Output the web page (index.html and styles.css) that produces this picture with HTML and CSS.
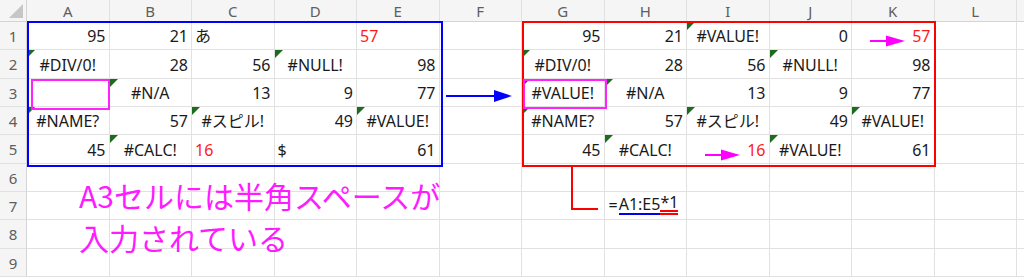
FILE: index.html
```html
<!DOCTYPE html>
<html lang="ja">
<head>
<meta charset="utf-8">
<link rel="stylesheet" href="styles.css">
</head>
<body>
<div class="sheet">
  <div class="grid">
    <div class="corner"><svg class="corner-tri" width="14" height="14" viewBox="0 0 14 14"><polygon points="14,0 14,14 0,14" fill="#c6c6c6"/></svg></div>
    <div class="ch">A</div><div class="ch">B</div><div class="ch">C</div><div class="ch">D</div><div class="ch">E</div><div class="ch">F</div><div class="ch">G</div><div class="ch">H</div><div class="ch">I</div><div class="ch">J</div><div class="ch">K</div><div class="ch">L</div><div class="ch"></div>

    <div class="rh">1</div>
    <div class="c n">95</div><div class="c n">21</div><div class="c t">あ</div><div class="c"></div><div class="c t red">57</div><div class="c"></div>
    <div class="c n">95</div><div class="c n">21</div><div class="c e err">#VALUE!</div><div class="c n">0</div><div class="c n red">57</div><div class="c"></div><div class="c"></div>

    <div class="rh">2</div>
    <div class="c e err">#DIV/0!</div><div class="c n">28</div><div class="c n">56</div><div class="c e err">#NULL!</div><div class="c n">98</div><div class="c"></div>
    <div class="c e err">#DIV/0!</div><div class="c n">28</div><div class="c n">56</div><div class="c e err">#NULL!</div><div class="c n">98</div><div class="c"></div><div class="c"></div>

    <div class="rh">3</div>
    <div class="c"></div><div class="c e err">#N/A</div><div class="c n">13</div><div class="c n">9</div><div class="c n">77</div><div class="c"></div>
    <div class="c e err">#VALUE!</div><div class="c e err">#N/A</div><div class="c n">13</div><div class="c n">9</div><div class="c n">77</div><div class="c"></div><div class="c"></div>

    <div class="rh">4</div>
    <div class="c e err">#NAME?</div><div class="c n">57</div><div class="c e err">#スピル!</div><div class="c n">49</div><div class="c e err">#VALUE!</div><div class="c"></div>
    <div class="c e err">#NAME?</div><div class="c n">57</div><div class="c e err">#スピル!</div><div class="c n">49</div><div class="c e err">#VALUE!</div><div class="c"></div><div class="c"></div>

    <div class="rh">5</div>
    <div class="c n">45</div><div class="c e err">#CALC!</div><div class="c t red">16</div><div class="c t">$</div><div class="c n">61</div><div class="c"></div>
    <div class="c n">45</div><div class="c e err">#CALC!</div><div class="c n red">16</div><div class="c e err">#VALUE!</div><div class="c n">61</div><div class="c"></div><div class="c"></div>

    <div class="rh">6</div>
    <div class="c"></div><div class="c"></div><div class="c"></div><div class="c"></div><div class="c"></div><div class="c"></div><div class="c"></div><div class="c"></div><div class="c"></div><div class="c"></div><div class="c"></div><div class="c"></div><div class="c"></div>

    <div class="rh">7</div>
    <div class="c"></div><div class="c"></div><div class="c"></div><div class="c"></div><div class="c"></div><div class="c"></div><div class="c"></div>
    <div class="c t formula">=<span class="ul-blue">A1:E5</span><span class="ul-red">*1</span></div>
    <div class="c"></div><div class="c"></div><div class="c"></div><div class="c"></div><div class="c"></div>

    <div class="rh">8</div>
    <div class="c"></div><div class="c"></div><div class="c"></div><div class="c"></div><div class="c"></div><div class="c"></div><div class="c"></div><div class="c"></div><div class="c"></div><div class="c"></div><div class="c"></div><div class="c"></div><div class="c"></div>

    <div class="rh">9</div>
    <div class="c"></div><div class="c"></div><div class="c"></div><div class="c"></div><div class="c"></div><div class="c"></div><div class="c"></div><div class="c"></div><div class="c"></div><div class="c"></div><div class="c"></div><div class="c"></div><div class="c"></div>
  </div>

  <div class="box box-blue"></div>
  <div class="box box-red"></div>
  <div class="box box-pink box-a3"></div>
  <div class="box box-pink box-g3"></div>

  <svg class="arrow arrow-blue" width="68" height="14" viewBox="0 0 68 14">
    <line x1="0" y1="7" x2="50" y2="7" stroke="#0000ff" stroke-width="2"/>
    <polygon points="48,1 66,7 48,13" fill="#0000ff"/>
  </svg>
  <svg class="arrow arrow-k1" width="36" height="12" viewBox="0 0 36 12">
    <line x1="0" y1="6" x2="18" y2="6" stroke="#ff00ff" stroke-width="2"/>
    <polygon points="16,0.5 35,6 16,11.5" fill="#ff00ff"/>
  </svg>
  <svg class="arrow arrow-i5" width="36" height="12" viewBox="0 0 36 12">
    <line x1="0" y1="6" x2="18" y2="6" stroke="#ff00ff" stroke-width="2"/>
    <polygon points="16,0.5 35,6 16,11.5" fill="#ff00ff"/>
  </svg>

  <div class="connector"></div>

  <div class="note">A3セルには半角スペースが<br>入力されている</div>
</div>
</body>
</html>
```

FILE: styles.css
```css
html, body {
  margin: 0;
  padding: 0;
  background: #ffffff;
}
body {
  width: 1024px;
  height: 278px;
  overflow: hidden;
  font-family: "Noto Sans", "Noto Sans CJK JP", sans-serif;
}
.sheet {
  position: relative;
  width: 1024px;
  height: 278px;
  overflow: hidden;
}
.grid {
  display: grid;
  grid-template-columns: 27px repeat(12, 82.5px) 40px;
  grid-template-rows: 22px repeat(9, 28.33px);
}
.corner {
  position: relative;
  background: #f5f5f5;
  border-right: 1px solid #d4d4d4;
  border-bottom: 1px solid #d4d4d4;
}
.corner-tri {
  position: absolute;
  right: 3px;
  bottom: 3px;
}
.ch {
  background: #f5f5f5;
  border-right: 1px solid #e1e1e1;
  border-bottom: 1px solid #d4d4d4;
  color: #5e5e5e;
  font-size: 15px;
  display: flex;
  align-items: center;
  justify-content: center;
  line-height: 1;
  padding-top: 1px;
}
.rh {
  background: #f5f5f5;
  border-right: 1px solid #d4d4d4;
  border-bottom: 1px solid #e1e1e1;
  color: #5e5e5e;
  font-size: 15px;
  display: flex;
  align-items: center;
  justify-content: center;
  line-height: 1;
  padding-top: 2px;
}
.c {
  position: relative;
  border-right: 1px solid #e1e1e1;
  border-bottom: 1px solid #e1e1e1;
  display: flex;
  align-items: flex-end;
  font-size: 16px;
  line-height: 20px;
  color: #1a1a1a;
  padding: 0 3px 3px 3px;
  white-space: nowrap;
  box-sizing: border-box;
}
.n { justify-content: flex-end; }
.t { justify-content: flex-start; }
.e { justify-content: center; }
.red { color: #ff1a1a; }
.err::before {
  content: "";
  position: absolute;
  top: 0;
  left: 0;
  border-style: solid;
  border-width: 8px 8px 0 0;
  border-color: #1d6b1d transparent transparent transparent;
}
.formula {
  overflow: visible;
  padding-left: 4px;
  padding-bottom: 4px;
}
.ul-blue {
  border-bottom: 2px solid #0000ee;
  line-height: 17px;
  margin-left: 1px;
}
.ul-red {
  border-bottom: 5px double #ff0000;
  line-height: 16px;
}
.box {
  position: absolute;
  box-sizing: border-box;
  border: 2px solid;
}
.box-blue {
  left: 27px;
  top: 21px;
  width: 416px;
  height: 146px;
  border-color: #0000ff;
}
.box-red {
  left: 522px;
  top: 21px;
  width: 414px;
  height: 146px;
  border-color: #ff0000;
}
.box-pink {
  border-color: #ff22ff;
}
.box-a3 {
  left: 31px;
  top: 79px;
  width: 79px;
  height: 31px;
}
.box-g3 {
  left: 523px;
  top: 79px;
  width: 84px;
  height: 30px;
}
.arrow {
  position: absolute;
}
.arrow-blue {
  left: 446px;
  top: 89px;
}
.arrow-k1 {
  left: 870px;
  top: 35px;
}
.arrow-i5 {
  left: 705px;
  top: 149px;
}
.connector {
  position: absolute;
  left: 571px;
  top: 166px;
  width: 27px;
  height: 44px;
  border-left: 2px solid #ff0000;
  border-bottom: 2px solid #ff0000;
  box-sizing: border-box;
}
.note {
  position: absolute;
  left: 79px;
  top: 174px;
  font-family: "Noto Sans CJK JP", sans-serif;
  font-size: 30px;
  line-height: 42px;
  color: #ff1aff;
  white-space: nowrap;
}
```
